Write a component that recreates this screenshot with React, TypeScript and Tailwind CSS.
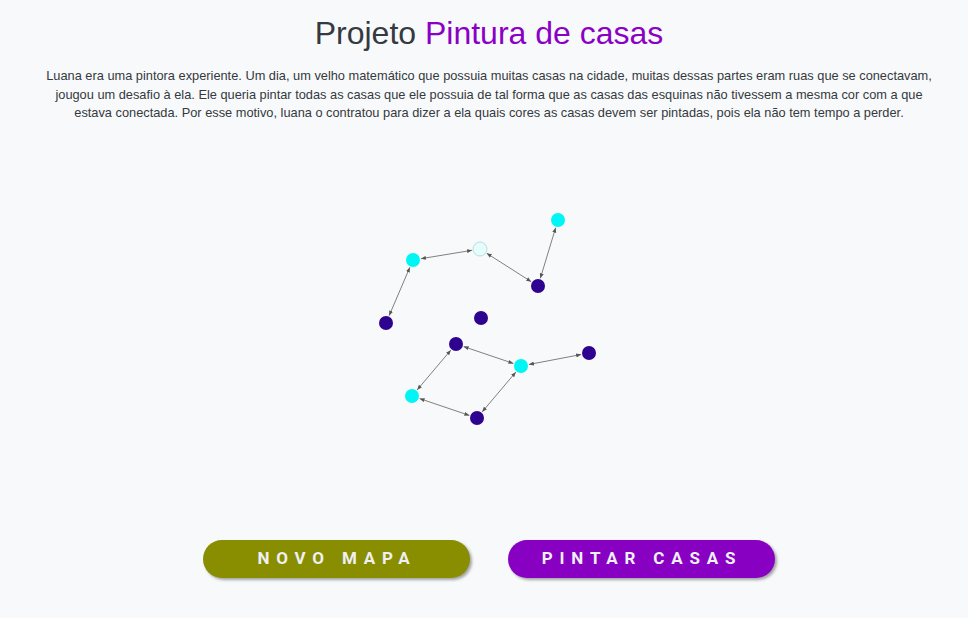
import React from "react";

type Node = { id: string; x: number; y: number; color: "cyan" | "purple" | "empty" };

const NODES: Node[] = [
  { id: "a", x: 558, y: 220, color: "cyan" },
  { id: "b", x: 480, y: 249, color: "empty" },
  { id: "c", x: 413, y: 260, color: "cyan" },
  { id: "d", x: 538, y: 286, color: "purple" },
  { id: "e", x: 386, y: 323, color: "purple" },
  { id: "f", x: 481, y: 318, color: "purple" },
  { id: "g", x: 456, y: 344, color: "purple" },
  { id: "h", x: 521, y: 366, color: "cyan" },
  { id: "i", x: 589, y: 353, color: "purple" },
  { id: "j", x: 412, y: 396, color: "cyan" },
  { id: "k", x: 477, y: 418, color: "purple" },
];

const EDGES: [string, string][] = [
  ["c", "b"],
  ["b", "d"],
  ["a", "d"],
  ["c", "e"],
  ["g", "h"],
  ["h", "i"],
  ["g", "j"],
  ["j", "k"],
  ["k", "h"],
];

const R = 7;
const TOP = 140;

const fill = { cyan: "#00f5f5", purple: "#2e0390", empty: "#e6fdfd" };

const Graph = () => {
  const byId = Object.fromEntries(NODES.map((n) => [n.id, n]));
  return (
    <svg width="968" height="380" viewBox={`0 ${TOP} 968 380`} className="block">
      <defs>
        <marker id="arr" viewBox="0 0 10 10" refX="10" refY="5" markerWidth="5" markerHeight="5" orient="auto-start-reverse">
          <path d="M0 1 L10 5 L0 9 z" fill="#555" />
        </marker>
      </defs>
      {EDGES.map(([s, t]) => {
        const a = byId[s];
        const b = byId[t];
        const dx = b.x - a.x;
        const dy = b.y - a.y;
        const len = Math.hypot(dx, dy);
        const ux = dx / len;
        const uy = dy / len;
        return (
          <line
            key={s + t}
            x1={a.x + ux * (R + 1)}
            y1={a.y + uy * (R + 1)}
            x2={b.x - ux * (R + 1)}
            y2={b.y - uy * (R + 1)}
            stroke="#808080"
            strokeWidth="1"
            markerStart="url(#arr)"
            markerEnd="url(#arr)"
          />
        );
      })}
      {NODES.map((n) => (
        <circle
          key={n.id}
          cx={n.x}
          cy={n.y}
          r={R}
          fill={fill[n.color]}
          stroke={n.color === "empty" ? "#b8dede" : "none"}
          strokeWidth="1"
        />
      ))}
    </svg>
  );
};

export default function App() {
  return (
    <div className="min-h-[618px] w-full bg-[#f8f9fa] font-['Liberation_Sans',Arial,sans-serif] text-[#212529]">
      <div className="flex flex-col items-center pt-[14px]">
        <h1 className="ml-[10px] text-[32px] leading-[38px] text-[#343a40]">
          Projeto <span className="text-[#8a00c4]">Pintura de casas</span>
        </h1>
        <p className="ml-[10px] mt-[15px] w-[890px] text-center text-[12.8px] leading-[18.5px] text-[#343a40]">
          Luana era uma pintora experiente. Um dia, um velho matemático que possuia muitas casas na cidade, muitas dessas partes eram ruas que se conectavam,
          jougou um desafio à ela. Ele queria pintar todas as casas que ele possuia de tal forma que as casas das esquinas não tivessem a mesma cor com a que
          estava conectada. Por esse motivo, luana o contratou para dizer a ela quais cores as casas devem ser pintadas, pois ela não tem tempo a perder.
        </p>
        <div className="mt-[17px]">
          <Graph />
        </div>
        <div className="ml-[10px] mt-[20px] flex gap-[38px]">
          <button className="h-[38px] w-[267px] rounded-full bg-[#888e00] pl-[1px] font-['Roboto',sans-serif] text-[17px] font-bold tracking-[6.8px] text-[#eef0f4] shadow-[2px_2px_3px_rgba(0,0,0,0.35)]">
            NOVO MAPA
          </button>
          <button className="h-[38px] w-[267px] rounded-full bg-[#8800c2] pl-[1px] font-['Roboto',sans-serif] text-[17px] font-bold tracking-[6.8px] text-[#eef0f4] shadow-[2px_2px_3px_rgba(0,0,0,0.35)]">
            PINTAR CASAS
          </button>
        </div>
      </div>
    </div>
  );
}
